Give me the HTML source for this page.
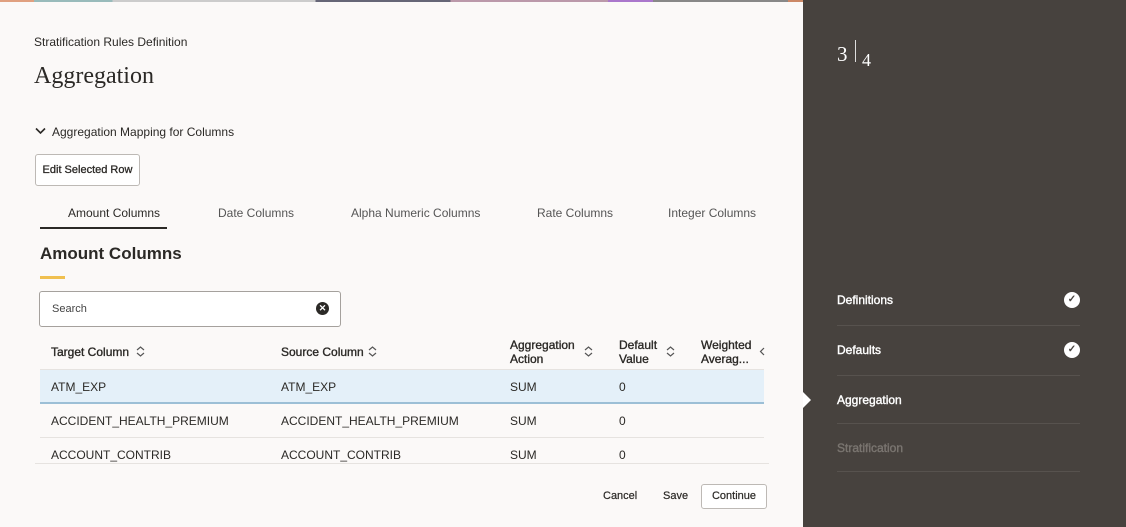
<!DOCTYPE html>
<html><head><style>
*{box-sizing:border-box;margin:0;padding:0}
body{width:1126px;height:527px;overflow:hidden;background:#fbf9f8;font-family:"Liberation Sans",sans-serif;color:#161513;position:relative}
.a{position:absolute;white-space:nowrap}
.top{position:absolute;left:0;top:0;width:1126px;height:2px;background:linear-gradient(90deg,#e0a080 0 3%,#9bb 3% 10%,#ccc 10% 28%,#667 28% 40%,#b9a 40% 54%,#a7c 54% 58%,#888 58% 70%,#c86 70% 75%,#8bb 75% 86%,#555 86% 100%)}
.side{position:absolute;left:803px;top:0;width:323px;height:527px;background:#47423e}
.th{font-size:12px;color:#2b2926;-webkit-text-stroke:0.35px #2b2926}
.td{font-size:12px;color:#2b2926}
.step{position:absolute;left:837px;font-size:12px;color:#fff;-webkit-text-stroke:0.4px #fff}
.line{position:absolute;left:837px;width:243px;height:1px;background:#57524e}
.chk{position:absolute;left:1064px;width:16px;height:16px;border-radius:50%;background:#fff;color:#47423e;font-size:10px;text-align:center;line-height:16px;font-weight:bold}
</style></head><body>
<div class="top"></div>
<div class="a" style="left:34px;top:35px;font-size:12px;color:#2b2926">Stratification Rules Definition</div>
<div class="a" style="left:34px;top:63px;font-size:24px;font-family:'Liberation Serif',serif;color:#2b2926">Aggregation</div>
<svg class="a" style="left:35px;top:127px" width="11" height="8"><path d="M1 1.5l4.5 4.5 4.5-4.5" fill="none" stroke="#2b2926" stroke-width="1.6"/></svg>
<div class="a" style="left:52px;top:125px;font-size:12px;color:#2b2926">Aggregation Mapping for Columns</div>
<div class="a" style="left:35px;top:154px;width:105px;height:32px;border:1px solid #bdb9b5;border-radius:3px;background:#fff;font-size:11px;-webkit-text-stroke:0.3px #2b2926;text-align:center;line-height:30px;color:#2b2926">Edit Selected Row</div>
<div class="a" style="left:68px;top:206px;font-size:12px;color:#2b2926">Amount Columns</div>
<div class="a" style="left:40px;top:227px;width:127px;height:2px;background:#2b2926"></div>
<div class="a" style="left:218px;top:206px;font-size:12px;color:#555">Date Columns</div>
<div class="a" style="left:351px;top:206px;font-size:12px;color:#555">Alpha Numeric Columns</div>
<div class="a" style="left:537px;top:206px;font-size:12px;color:#555">Rate Columns</div>
<div class="a" style="left:668px;top:206px;font-size:12px;color:#555">Integer Columns</div>
<div class="a" style="left:40px;top:244px;font-size:17px;font-weight:bold;color:#2b2926">Amount Columns</div>
<div class="a" style="left:40px;top:276px;width:25px;height:3px;background:#f0c050"></div>
<div class="a" style="left:39px;top:291px;width:302px;height:36px;border:1px solid #a5a19d;border-radius:3px;background:#fff"></div>
<div class="a" style="left:52px;top:303px;font-size:11px;color:#444">Search</div>
<div class="a" style="left:316px;top:302px;width:13px;height:13px;border-radius:50%;background:#2b2926;color:#fff;font-size:9px;line-height:13px;text-align:center;font-weight:bold">✕</div>
<div class="a th" style="left:51px;top:345px">Target Column</div>
<div class="a th" style="left:281px;top:345px">Source Column</div>
<div class="a th" style="left:510px;top:338px;line-height:14px">Aggregation<br>Action</div>
<div class="a th" style="left:619px;top:338px;line-height:14px">Default<br>Value</div>
<div class="a th" style="left:701px;top:338px;line-height:14px">Weighted<br>Averag...</div>
<svg class="a" style="left:136px;top:346px" width="9" height="11"><path d="M1 4l3.5-3 3.5 3M1 7l3.5 3 3.5-3" fill="none" stroke="#555" stroke-width="1.2"/></svg>
<svg class="a" style="left:368px;top:346px" width="9" height="11"><path d="M1 4l3.5-3 3.5 3M1 7l3.5 3 3.5-3" fill="none" stroke="#555" stroke-width="1.2"/></svg>
<svg class="a" style="left:584px;top:346px" width="9" height="11"><path d="M1 4l3.5-3 3.5 3M1 7l3.5 3 3.5-3" fill="none" stroke="#555" stroke-width="1.2"/></svg>
<svg class="a" style="left:666px;top:346px" width="9" height="11"><path d="M1 4l3.5-3 3.5 3M1 7l3.5 3 3.5-3" fill="none" stroke="#555" stroke-width="1.2"/></svg>
<svg class="a" style="left:759px;top:346px" width="6" height="11"><path d="M5 2l-3.5 3.5 3.5 3.5" fill="none" stroke="#555" stroke-width="1.2"/></svg>
<div class="a" style="left:40px;top:369px;width:724px;height:35px;background:#e4f0f9;border-bottom:2px solid #9cbfd6;border-top:1px solid #e6e3e0"></div>
<div class="a td" style="left:51px;top:380px">ATM_EXP</div><div class="a td" style="left:281px;top:380px">ATM_EXP</div><div class="a td" style="left:510px;top:380px">SUM</div><div class="a td" style="left:619px;top:380px">0</div>
<div class="a td" style="left:51px;top:414px">ACCIDENT_HEALTH_PREMIUM</div><div class="a td" style="left:281px;top:414px">ACCIDENT_HEALTH_PREMIUM</div><div class="a td" style="left:510px;top:414px">SUM</div><div class="a td" style="left:619px;top:414px">0</div>
<div class="a" style="left:40px;top:437px;width:724px;height:1px;background:#e6e3e0"></div>
<div class="a td" style="left:51px;top:448px">ACCOUNT_CONTRIB</div><div class="a td" style="left:281px;top:448px">ACCOUNT_CONTRIB</div><div class="a td" style="left:510px;top:448px">SUM</div><div class="a td" style="left:619px;top:448px">0</div>
<div class="a" style="left:35px;top:463px;width:734px;height:1px;background:#e6e3e0"></div>
<div class="a" style="left:603px;top:490px;font-size:11px;color:#2b2926;-webkit-text-stroke:0.2px #2b2926">Cancel</div>
<div class="a" style="left:663px;top:490px;font-size:11px;color:#2b2926;-webkit-text-stroke:0.2px #2b2926">Save</div>
<div class="a" style="left:701px;top:484px;width:66px;height:25px;border:1px solid #bdb9b5;border-radius:3px;background:#fff;font-size:11px;text-align:center;line-height:23px;color:#2b2926;-webkit-text-stroke:0.2px #2b2926">Continue</div>
<div class="side"></div>
<div class="a" style="left:837px;top:42px;font-size:21px;color:#fff;font-family:'Liberation Serif',serif">3</div>
<div class="a" style="left:855px;top:40px;width:1px;height:22px;background:#ddd"></div>
<div class="a" style="left:862px;top:50px;font-size:18px;color:#fff;font-family:'Liberation Serif',serif">4</div>
<div class="step" style="top:293px">Definitions</div><div class="chk" style="top:292px">✓</div>
<div class="line" style="top:325px"></div>
<div class="step" style="top:343px">Defaults</div><div class="chk" style="top:342px">✓</div>
<div class="line" style="top:375px"></div>
<div class="a" style="left:803px;top:392px;width:0;height:0;border-top:8px solid transparent;border-bottom:8px solid transparent;border-left:8px solid #fff"></div>
<div class="step" style="top:393px">Aggregation</div>
<div class="line" style="top:423px"></div>
<div class="step" style="top:441px;color:#7a7570;-webkit-text-stroke:0.4px #7a7570">Stratification</div>
<div class="line" style="top:471px"></div>
</body></html>
